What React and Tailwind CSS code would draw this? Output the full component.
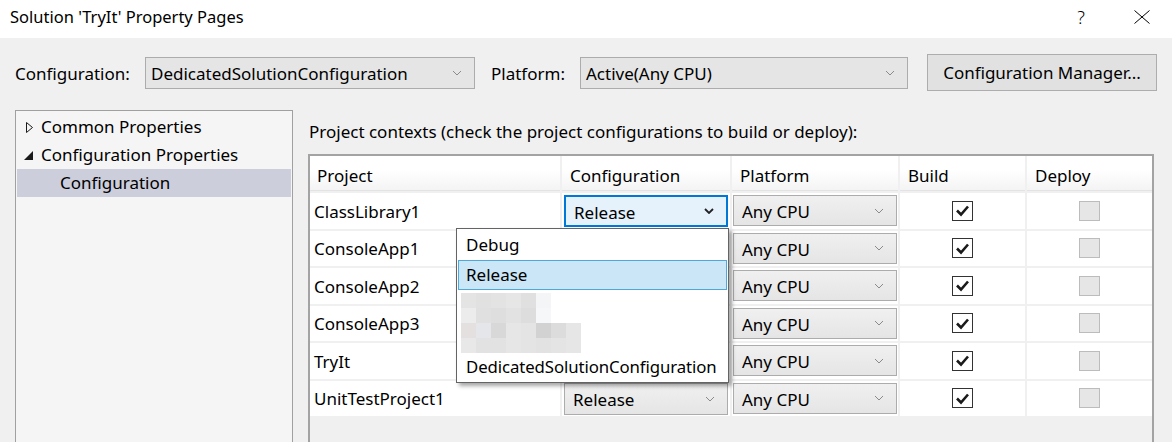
import React from 'react';

const font = { fontFamily: '"Noto Sans", "Open Sans", sans-serif' };

const Chevron = ({ dark }) => (
  <svg width="10" height="6" viewBox="0 0 10 6" className="shrink-0">
    <polyline
      points="1,1 5,5 9,1"
      fill="none"
      stroke={dark ? '#222' : '#8a8a8a'}
      strokeWidth={dark ? 1.8 : 1}
    />
  </svg>
);

const Combo = ({ value, focused, className = '' }) => (
  <div
    className={`flex items-center justify-between pl-[8px] pr-[12px] border ${
      focused
        ? 'bg-[#e5f1fb] border-[#0078d7] border-2 pl-[7px]'
        : 'bg-gradient-to-b from-[#f0f0f0] to-[#e5e5e5] border-[#acacac]'
    } ${className}`}
  >
    <span className="text-[17px] text-black leading-none pt-[2px]">{value}</span>
    <Chevron dark={focused} />
  </div>
);

const CheckBox = ({ checked, disabled }) => (
  <div
    className={`w-[21px] h-[20px] border flex items-center justify-center ${
      disabled ? 'bg-[#e6e6e6] border-[#bcbcbc]' : 'bg-white border-[#333333] border-[1.5px]'
    }`}
  >
    {checked && (
      <svg width="15" height="13" viewBox="0 0 15 13">
        <polyline points="2,6.5 6,10.5 13,2.5" fill="none" stroke="#1a1a1a" strokeWidth="2.6" />
      </svg>
    )}
  </div>
);

const projects = ['ClassLibrary1', 'ConsoleApp1', 'ConsoleApp2', 'ConsoleApp3', 'TryIt', 'UnitTestProject1'];

const blurRows = [
  ['#e4e4e4', '#e1e1e1', '#e3e3e3', '#e6e6e6', '#e0e0e0', '#f4f5f7'],
  ['#ececec', '#e0e0e0', '#dedede', '#e2e2e2', '#dddddd', '#f6f7f9'],
  ['#e4e0e0', '#e4e6e9', '#d8d8d8', '#e6e6e6', '#e4e4e4', '#d2d2d2', '#dcdcdc', '#e6e6e6'],
  ['#e8e8e8', '#e2e2e2', '#e2e2e2', '#e6e6e6', '#e4e4e4', '#e2e2e2', '#e4e4e4', '#e6e6e6'],
];

const TreeRow = ({ icon, label, indent, selected }) => (
  <div className={`h-[28px] flex items-center ${selected ? 'bg-[#cccedb]' : ''}`}>
    <div className="w-[24px] flex justify-end pr-[8px]">{icon}</div>
    <span className={`text-[17px] text-black ${indent ? 'pl-[19px]' : ''}`}>{label}</span>
  </div>
);

export default function App() {
  return (
    <div className="w-[1172px] h-[442px] overflow-hidden bg-[#f0f0f0] relative text-black" style={font}>
      {/* title bar */}
      <div className="h-[38px] bg-white flex items-center justify-between pl-[10px]">
        <span className="text-[16.5px] -mt-[4px]">Solution 'TryIt' Property Pages</span>
        <div className="flex items-center -mt-[4px]">
          <span className="text-[18px] font-light w-[20px] mr-[43px] text-center">?</span>
          <svg width="16" height="14" viewBox="0 0 16 14" className="mr-[22px]">
            <line x1="0.5" y1="0.5" x2="15.5" y2="13.5" stroke="#000" strokeWidth="1" />
            <line x1="15.5" y1="0.5" x2="0.5" y2="13.5" stroke="#000" strokeWidth="1" />
          </svg>
        </div>
      </div>

      {/* configuration row */}
      <div className="mt-[16px] h-[37px] flex items-center pl-[15px]">
        <span className="w-[130px] text-[17px] pt-[2px]">Configuration:</span>
        <Combo value="DedicatedSolutionConfiguration" className="w-[330px] h-[32px] !bg-[#e5e5e5] !bg-none !pl-[5px]" />
        <span className="w-[105px] pl-[16px] text-[17px] pt-[2px]">Platform:</span>
        <Combo value="Active(Any CPU)" className="w-[328px] h-[32px] !bg-[#e5e5e5] !bg-none !pl-[5px]" />
        <button className="ml-[19px] w-[230px] h-[37px] bg-[#e1e1e1] border border-[#adadad] text-[17px]">
          Configuration Manager...
        </button>
      </div>

      {/* main */}
      <div className="mt-[19px] flex pl-[15px]">
        <div className="w-[278px] h-[340px] border border-[#a0a0a0] bg-[#f5f5f5] pt-[2px] px-[1px]">
          <TreeRow
            label="Common Properties"
            icon={
              <svg width="7" height="11" viewBox="0 0 7 11">
                <polygon points="0.5,0.5 6.5,5.5 0.5,10.5" fill="none" stroke="#1a1a1a" strokeWidth="1" />
              </svg>
            }
          />
          <TreeRow
            label="Configuration Properties"
            icon={
              <svg width="9" height="9" viewBox="0 0 9 9">
                <polygon points="9,0 9,9 0,9" fill="#1a1a1a" />
              </svg>
            }
          />
          <TreeRow label="Configuration" indent selected />
        </div>

        <div className="ml-[15px] flex-1">
          <div className="h-[45px] flex items-center text-[17px] pl-[1px] -mt-[1px]">
            Project contexts (check the project configurations to build or deploy):
          </div>
          <div className="w-[846px] h-[300px] border-2 border-[#a3a3a3] bg-[#f0f0f0]">
            <div className="grid grid-cols-[250px_168px_166px_125px_125px] gap-x-[2px] gap-y-[2px]">
              {['Project', 'Configuration', 'Platform', 'Build', 'Deploy'].map((h, i) => (
                <div
                  key={h}
                  className={`h-[35px] flex items-center pt-[5px] bg-gradient-to-b from-white from-40% to-[#f4f4f4] border-b border-[#e3e3e3] text-[17px] ${
                    i === 0 ? 'pl-[7px]' : 'pl-[8px]'
                  }`}
                >
                  {h}
                </div>
              ))}
              {projects.map((p, r) => (
                <React.Fragment key={p}>
                  <div className="h-[35.5px] bg-white flex items-center pl-[4px] pt-[1px] text-[17px]">{p}</div>
                  <div className="h-[35.5px] bg-white flex items-start pt-[2px] px-[2px]">
                    <Combo
                      value={r === 0 || r === 5 ? 'Release' : ''}
                      focused={r === 0}
                      className="w-full h-[32px]"
                    />
                  </div>
                  <div className="h-[35.5px] bg-white flex items-start pt-[2px] px-[1px]">
                    <Combo value="Any CPU" className="w-full h-[31px]" />
                  </div>
                  <div className="h-[35.5px] bg-white flex items-center justify-center">
                    <CheckBox checked />
                  </div>
                  <div className="h-[35.5px] bg-white flex items-center justify-center">
                    <CheckBox disabled />
                  </div>
                </React.Fragment>
              ))}
            </div>
          </div>
        </div>
      </div>

      {/* open dropdown list */}
      <div className="absolute left-[456px] top-[228px] w-[273px] bg-white border border-[#646464] p-px shadow-[3px_3px_4px_rgba(0,0,0,0.35)]">
        <div className="h-[30px] flex items-center pl-[8px] text-[17px]">Debug</div>
        <div className="h-[30px] flex items-center pl-[7px] text-[17px] bg-[#cbe6f6] border border-[#4ea8dc]">
          Release
        </div>
        <div className="h-[63px] pt-[3px] pl-[3px]">
          {blurRows.map((row, i) => (
            <div key={i} className="flex">
              {row.map((c, j) => (
                <div key={j} className="w-[15px] h-[15px]" style={{ backgroundColor: c }} />
              ))}
            </div>
          ))}
        </div>
        <div className="h-[28px] flex items-center pl-[8px] text-[16.8px] tracking-[-0.1px]">
          DedicatedSolutionConfiguration
        </div>
      </div>
    </div>
  );
}
